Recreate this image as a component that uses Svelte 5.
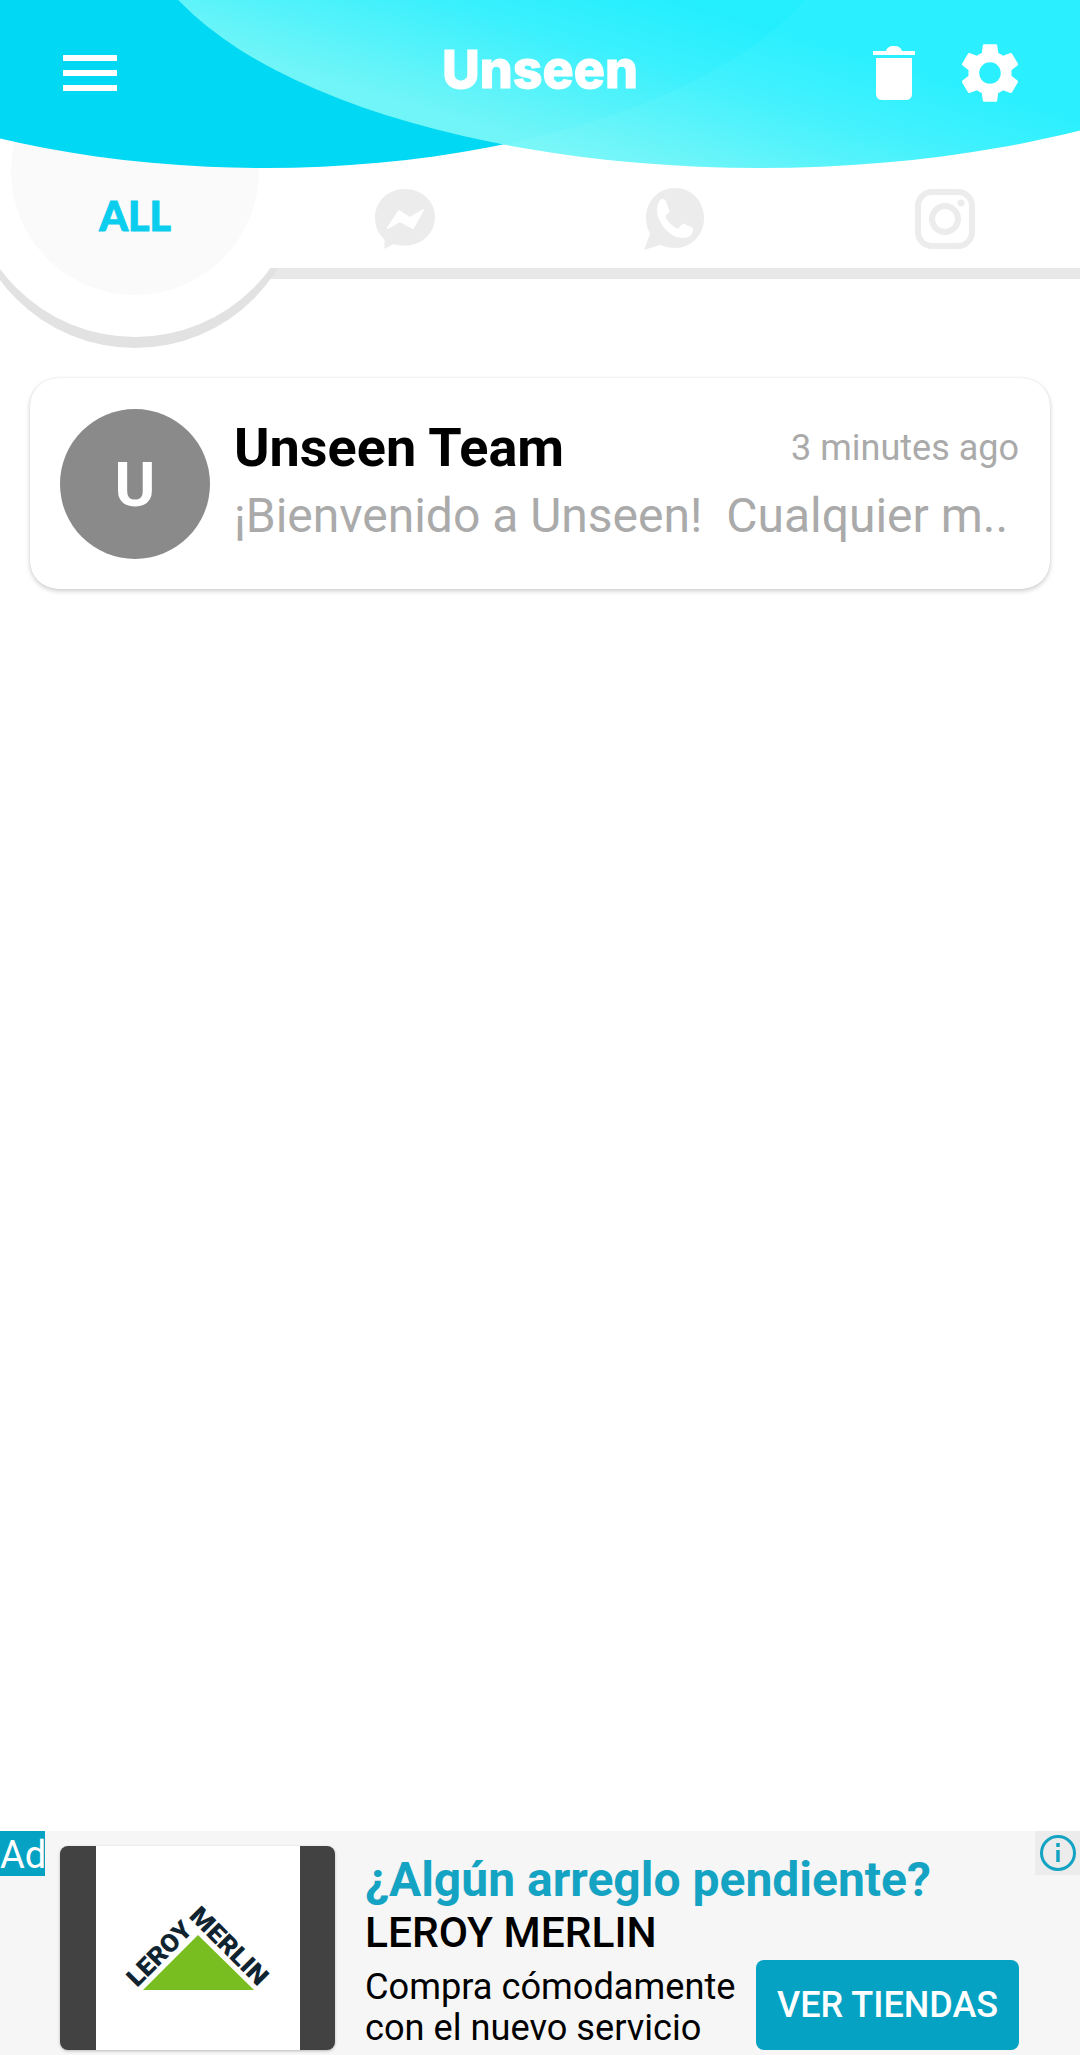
<script>
  const tabs = ['messenger', 'whatsapp', 'instagram'];
</script>

<div class="app">
  <header class="topbar">
    <svg class="wave" width="1080" height="170" viewBox="0 0 1080 170" aria-hidden="true">
      <defs>
        <linearGradient id="lightwave" gradientUnits="userSpaceOnUse" x1="680" y1="0" x2="630" y2="170">
          <stop offset="0" stop-color="#24efff" />
          <stop offset="0.4" stop-color="#3df1fd" />
          <stop offset="1" stop-color="#74f6f8" />
        </linearGradient>
      </defs>
      <ellipse cx="265" cy="-100" rx="582" ry="268" fill="#00d8f4" />
      <ellipse cx="760" cy="-100" rx="627" ry="268" fill="url(#lightwave)" opacity="0.97" />
    </svg>

    <button class="menu" aria-label="Menu"><span></span><span></span><span></span></button>
    <h1>Unseen</h1>
    <div class="actions">
      <svg class="trash" width="42" height="54" viewBox="0 0 42 54" fill="#fff">
        <path d="M0 5h13c1-3 3-5 8-5s7 2 8 5h13v4H0z" />
        <path d="M3 12h36v36c0 3-2 6-6 6H9c-4 0-6-3-6-6z" />
      </svg>
      <svg class="gear" width="72" height="72" viewBox="0 0 24 24" fill="#fff">
        <path d="M19.14 12.94c.04-.3.06-.61.06-.94 0-.32-.02-.64-.07-.94l2.03-1.58c.18-.14.23-.41.12-.61l-1.92-3.32c-.12-.22-.37-.29-.59-.22l-2.39.96c-.5-.38-1.03-.7-1.62-.94l-.36-2.54c-.04-.24-.24-.41-.48-.41h-3.84c-.24 0-.43.17-.47.41l-.36 2.54c-.59.24-1.13.57-1.62.94l-2.39-.96c-.22-.08-.47 0-.59.22L2.74 8.87c-.12.21-.08.47.12.61l2.03 1.58c-.05.3-.09.63-.09.94s.02.64.07.94l-2.03 1.58c-.18.14-.23.41-.12.61l1.92 3.32c.12.22.37.29.59.22l2.39-.96c.5.38 1.03.7 1.62.94l.36 2.54c.05.24.24.41.48.41h3.84c.24 0 .44-.17.47-.41l.36-2.54c.59-.24 1.13-.56 1.62-.94l2.39.96c.22.08.47 0 .59-.22l1.92-3.32c.12-.22.07-.47-.12-.61l-2.01-1.58zM12 15.6c-1.98 0-3.6-1.62-3.6-3.6s1.62-3.6 3.6-3.6 3.6 1.62 3.6 3.6-1.62 3.6-3.6 3.6z" />
      </svg>
    </div>
  </header>

  <nav class="tabs">
    <svg class="selected-bg" width="330" height="260" viewBox="0 100 330 260" aria-hidden="true">
      <defs>
        <clipPath id="below-line"><rect x="0" y="268" width="330" height="100" /></clipPath>
      </defs>
      <circle cx="135" cy="180" r="168" fill="#e2e2e2" clip-path="url(#below-line)" />
      <circle cx="135" cy="169" r="168" fill="#fff" />
      <circle cx="135" cy="171" r="124" fill="#fafafa" />
    </svg>
    <div class="tab all">ALL</div>
    {#each tabs as tab}
      <div class="tab">
        {#if tab === 'messenger'}
          <svg width="60" height="60" viewBox="0 0 60 60">
            <path fill="#ececec" d="M30 0C13 0 0 12.500 0 29c0 8.600 3.500 16.100 9.500 21.300V60l9-4.900c3.600 1 7.500 1.500 11.500 1.500 17 0 30-12.400 30-28.800C60 12.500 47 0 30 0z" />
            <path fill="#fff" stroke="#fff" stroke-width="2" stroke-linejoin="round" d="M13 39l11-17 11 7 13-8-10 18-13-7z" />
          </svg>
        {:else if tab === 'whatsapp'}
          <svg class="wa" width="60" height="62" viewBox="0 0 60 62">
            <path fill="#ececec" d="M31 0C14.500 0 2 13 2 30c0 5.800 1.500 11 4.200 15.600L0 62l16.500-5.200C20.800 59 25.700 60 31 60c16.500 0 29-13 29-30S47.500 0 31 0z" />
            <path fill="#fff" d="M18 11c2 0 3.300.5 4 2.400l3 8c.5 1.300.2 2.300-.7 3.300l-2.500 3c-.5.600-.5 1.200 0 2.100 2.800 5 6.300 8.400 11 10.600.9.400 1.500.3 2-.3l3-3.500c.8-1 1.800-1.100 2.800-.6l6.800 3.300c1.200.6 1.800 1.300 1.700 2.600-.3 4.800-4.600 8-9.500 8-7 0-13-3.200-18.500-9C16.800 35.500 13 29 13 22c0-4.500 1.500-8.500 3.300-10.300.5-.5 1-.7 1.700-.7z" />
          </svg>
        {:else}
          <svg width="60" height="60" viewBox="0 0 60 60" fill="none" stroke="#ececec">
            <rect x="3" y="3" width="54" height="54" rx="14" stroke-width="6" />
            <circle cx="30" cy="30" r="13" stroke-width="6" />
            <circle cx="46" cy="14" r="3.500" fill="#ececec" stroke="none" />
          </svg>
        {/if}
      </div>
    {/each}
  </nav>

  <main class="list">
    <article class="card">
      <div class="avatar">U</div>
      <div class="body">
        <div class="row">
          <span class="name">Unseen Team</span>
          <span class="time">3 minutes ago</span>
        </div>
        <p class="preview">¡Bienvenido a Unseen!  Cualquier m..</p>
      </div>
    </article>
  </main>

  <aside class="ad">
    <span class="ad-tag">Ad</span>
    <span class="ad-info">
      <svg width="38" height="38" viewBox="0 0 38 38" fill="none" stroke="#14a3c2" stroke-width="3">
        <circle cx="19" cy="19" r="16.500" />
        <path d="M19 16v12M19 9v4" stroke-width="3.500" />
      </svg>
    </span>
    <div class="ad-image">
      <svg width="204" height="204" viewBox="95 1846 204 204">
        <polygon points="197,1935 253,1990 142,1990" fill="#78be20" />
        <g class="logo-text">
          <text transform="translate(136 1988) rotate(-45)" textLength="80" lengthAdjust="spacingAndGlyphs">LEROY</text>
          <text transform="translate(187 1917) rotate(45)" textLength="99" lengthAdjust="spacingAndGlyphs">MERLIN</text>
        </g>
      </svg>
    </div>
    <div class="ad-copy">
      <h2>¿Algún arreglo pendiente?</h2>
      <h3>LEROY MERLIN</h3>
      <div class="ad-bottom">
        <p>Compra cómodamente<br />con el nuevo servicio</p>
        <button class="cta">VER TIENDAS</button>
      </div>
    </div>
  </aside>
</div>

<style>
  :global(body) {
    margin: 0;
    background: #fff;
  }

  .app {
    width: 1080px;
    height: 2055px;
    display: flex;
    flex-direction: column;
    overflow: hidden;
    font-family: Roboto, sans-serif;
    background: #fff;
  }

  .topbar {
    position: relative;
    z-index: 2;
    height: 170px;
    flex: none;
    display: flex;
    align-items: flex-start;
    justify-content: space-between;
    padding: 0 54px 0 63px;
    box-sizing: border-box;
  }

  .wave {
    position: absolute;
    left: 0;
    top: 0;
  }

  .menu {
    position: relative;
    width: 54px;
    margin-top: 55px;
    padding: 0;
    border: none;
    background: none;
    display: flex;
    flex-direction: column;
    gap: 9px;
  }

  .menu span {
    display: block;
    height: 6px;
    background: #fff;
  }

  h1 {
    position: absolute;
    left: 0;
    right: 0;
    top: 36px;
    margin: 0;
    text-align: center;
    font-family: Inter, sans-serif;
    font-weight: 800;
    font-size: 52px;
    line-height: 68px;
    color: #fff;
    -webkit-text-stroke: 1px #fff;
  }

  .actions {
    position: relative;
    display: flex;
    align-items: flex-start;
    gap: 39px;
    margin-top: 37px;
  }

  .trash {
    margin-top: 9px;
  }

  .tabs {
    position: relative;
    height: 98px;
    flex: none;
    display: grid;
    grid-template-columns: repeat(4, 270px);
    border-bottom: 11px solid #e8e8e8;
  }

  .selected-bg {
    position: absolute;
    left: 0;
    top: -70px;
  }

  .tab {
    position: relative;
    display: flex;
    align-items: center;
    justify-content: center;
  }

  .wa {
    margin-left: -2px;
  }

  .all {
    padding-bottom: 8px;
    font-family: Lato, sans-serif;
    font-weight: 900;
    font-size: 41px;
    color: #0bcdee;
    -webkit-text-stroke: 1px #0bcdee;
  }

  .list {
    flex: 1;
    padding: 99px 30px 0;
    position: relative;
  }

  .card {
    height: 211px;
    box-sizing: border-box;
    display: flex;
    align-items: center;
    gap: 24px;
    padding: 0 31px 0 30px;
    border-radius: 28px;
    background: #fff;
    box-shadow: 0 2px 5px rgba(0, 0, 0, 0.2), 0 0 1px rgba(0, 0, 0, 0.12);
  }

  .avatar {
    width: 150px;
    height: 150px;
    flex: none;
    border-radius: 50%;
    background: #8a8a8a;
    color: #fff;
    display: flex;
    align-items: center;
    justify-content: center;
    padding-top: 2px;
    box-sizing: border-box;
    font-weight: 700;
    font-size: 62px;
  }

  .body {
    flex: 1;
    min-width: 0;
    margin-top: -7px;
  }

  .row {
    display: flex;
    justify-content: space-between;
    align-items: center;
  }

  .name {
    font-weight: 700;
    font-size: 54px;
    line-height: 64px;
    color: #000;
  }

  .time {
    font-size: 36px;
    color: #aaa;
  }

  .preview {
    margin: 8px 0 0;
    font-size: 48px;
    line-height: 56px;
    color: #aaa;
    white-space: pre;
  }

  .ad {
    position: relative;
    height: 224px;
    flex: none;
    display: flex;
    gap: 30px;
    padding: 15px 61px 5px 60px;
    box-sizing: border-box;
    background: #f6f6f6;
  }

  .ad-tag {
    position: absolute;
    left: 0;
    top: 0;
    width: 45px;
    height: 45px;
    background: #05a2c3;
    color: #fff;
    font-size: 38px;
    line-height: 49px;
    text-align: center;
  }

  .ad-info {
    position: absolute;
    right: 0;
    top: 0;
    width: 45px;
    height: 44px;
    background: #ececec;
    display: flex;
    align-items: center;
    justify-content: center;
  }

  .ad-image {
    width: 275px;
    height: 204px;
    flex: none;
    border-radius: 8px;
    background: #424242;
    box-shadow: 0 1px 3px rgba(0, 0, 0, 0.25);
    display: flex;
    justify-content: center;
  }

  .ad-image svg {
    background: #fff;
  }

  .logo-text {
    font-family: Roboto, sans-serif;
    font-weight: 900;
    font-size: 25px;
    fill: #0f2430;
  }

  .ad-copy {
    flex: 1;
    min-width: 0;
  }

  h2 {
    margin: 8px 0 0;
    font-weight: 700;
    font-size: 48px;
    line-height: 52px;
    color: #14a3c2;
    white-space: nowrap;
  }

  h3 {
    margin: 4px 0 0;
    font-weight: 500;
    font-size: 42.500px;
    line-height: 46px;
    color: #000;
  }

  .ad-bottom {
    display: flex;
    justify-content: space-between;
    align-items: flex-end;
    margin-top: 4px;
  }

  .ad-bottom p {
    margin: 0 0 2px;
    font-size: 36.200px;
    line-height: 41px;
    color: #000;
  }

  .cta {
    width: 263px;
    height: 90px;
    flex: none;
    padding: 0;
    border: none;
    border-radius: 8px;
    background: #05a2c3;
    color: #fff;
    font-family: Roboto, sans-serif;
    font-weight: 500;
    font-size: 36px;
  }
</style>
